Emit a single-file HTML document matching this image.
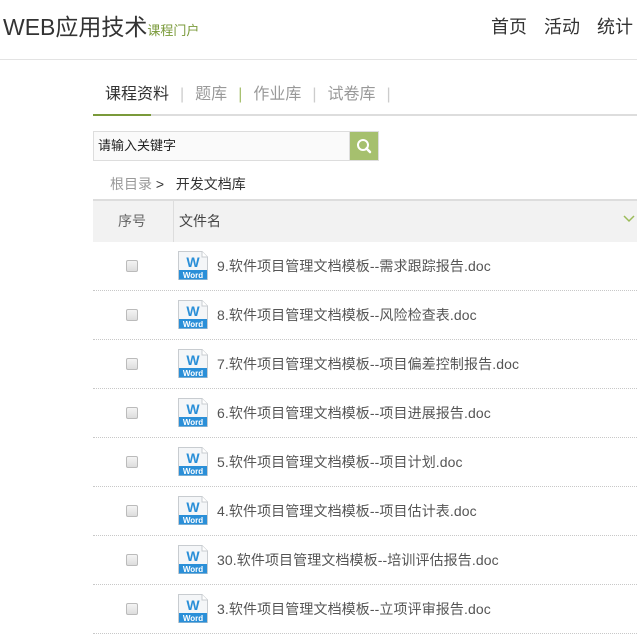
<!DOCTYPE html>
<html><head><meta charset="utf-8"><style>
*{margin:0;padding:0;box-sizing:border-box}
body{width:637px;height:613px;overflow:hidden;background:#fff;font-family:"Liberation Sans","Noto Sans CJK SC",sans-serif;color:#333;position:relative}
.a{position:absolute;white-space:nowrap}
.title{left:3px;top:11px;font-size:23px;color:#333;line-height:32px}
.title span{font-size:13px;color:#7a9a3a}
.nav{top:15px;font-size:18px;color:#333;line-height:24px}
.hl{left:0;top:59px;width:637px;height:1px;background:#e3e3e3}
.tabs{left:105px;top:84px;font-size:16px;line-height:22px;color:#999}
.tabs b{font-weight:normal;color:#333}
.tabs i{font-style:normal;color:#ccc;margin:0 11px}
.ul{left:93px;top:114px;width:544px;height:2px;background:#ddd}
.ul2{left:93px;top:114px;width:58px;height:2px;background:#7a9a3a}
.srch{left:93px;top:131px;width:257px;height:30px;border:1px solid #ddd;border-right:none;background:#fafafa;font-size:13px;line-height:28px;padding-left:4px;color:#222}
.btn{left:349px;top:131px;width:30px;height:30px;background:#a6c06e;border:1px solid #ddd}
.bc{left:110px;top:175px;font-size:14px;line-height:18px;color:#999}
.bc b{font-weight:normal;color:#333}
.th{left:93px;top:199px;width:544px;height:43px;background:#f2f2f2;border-top:2px solid #ddd}
.th .s{position:absolute;left:80px;top:0;width:1px;height:41px;background:#ddd}
.th .c1{position:absolute;left:25px;top:10px;font-size:14px;color:#666}
.th .c2{position:absolute;left:86px;top:10px;font-size:14px;color:#444}
.row{position:absolute;left:93px;width:544px;height:49px;border-bottom:1px dotted #c8c8c8}
.cb{position:absolute;left:33px;top:18px;width:12px;height:12px;border:1px solid #bbb;border-radius:2px;background:linear-gradient(#f4f4f4,#ddd)}
.ic{position:absolute;left:85px;top:9px;width:30px;height:29px}
.fn{position:absolute;left:124px;top:14px;font-size:14px;color:#555;line-height:20px;letter-spacing:0.1px}
</style></head><body>
<div class="a title">WEB应用技术<span>课程门户</span></div>
<div class="a nav" style="left:491px">首页</div>
<div class="a nav" style="left:544px">活动</div>
<div class="a nav" style="left:597px">统计</div>
<div class="a hl"></div>
<div class="a tabs"><b>课程资料</b><i>|</i>题库<i style="color:#a6c06e">|</i>作业库<i>|</i>试卷库<i>|</i></div>
<div class="a ul"></div><div class="a ul2"></div>
<div class="a srch">请输入关键字</div>
<div class="a btn"><svg width="28" height="28" viewBox="0 0 28 28"><circle cx="13" cy="13" r="5" fill="none" stroke="#fff" stroke-width="2"/><path d="M16.5 16.5L20 20" stroke="#fff" stroke-width="2.5" stroke-linecap="round"/></svg></div>
<div class="a bc">根目录 <b>&gt;&nbsp;&nbsp; 开发文档库</b></div>
<div class="a th"><div class="s"></div><div class="c1">序号</div><div class="c2">文件名</div>
<svg style="position:absolute;left:530px;top:14px" width="12" height="8"><path d="M1 1L6 6L11 1" fill="none" stroke="#9bbb59" stroke-width="1.5"/></svg></div>
<div id="rows"></div>
<script>
var n=["9.软件项目管理文档模板--需求跟踪报告.doc","8.软件项目管理文档模板--风险检查表.doc","7.软件项目管理文档模板--项目偏差控制报告.doc","6.软件项目管理文档模板--项目进展报告.doc","5.软件项目管理文档模板--项目计划.doc","4.软件项目管理文档模板--项目估计表.doc","30.软件项目管理文档模板--培训评估报告.doc","3.软件项目管理文档模板--立项评审报告.doc"];
var ic='<svg class="ic" viewBox="0 0 30 29"><path d="M0.5 0.5H24L29.5 6V28.5H0.5Z" fill="#f4f6f8" stroke="#c8ccd0"/><path d="M24 0.5V6H29.5" fill="#fff" stroke="#c8ccd0"/><text x="15" y="16" font-size="14" font-weight="bold" fill="#2a8fd8" text-anchor="middle" font-family="Liberation Sans">W</text><rect x="1" y="19" width="28" height="9.5" fill="#2a8fd8"/><text x="15" y="27" font-size="8" font-weight="bold" fill="#fff" text-anchor="middle" font-family="Liberation Sans">Word</text></svg>';
var h="";for(var i=0;i<8;i++){h+='<div class="row" style="top:'+(242+i*49)+'px"><div class="cb"></div>'+ic+'<div class="fn">'+n[i]+'</div></div>';}
document.getElementById("rows").innerHTML=h;
</script>
</body></html>
